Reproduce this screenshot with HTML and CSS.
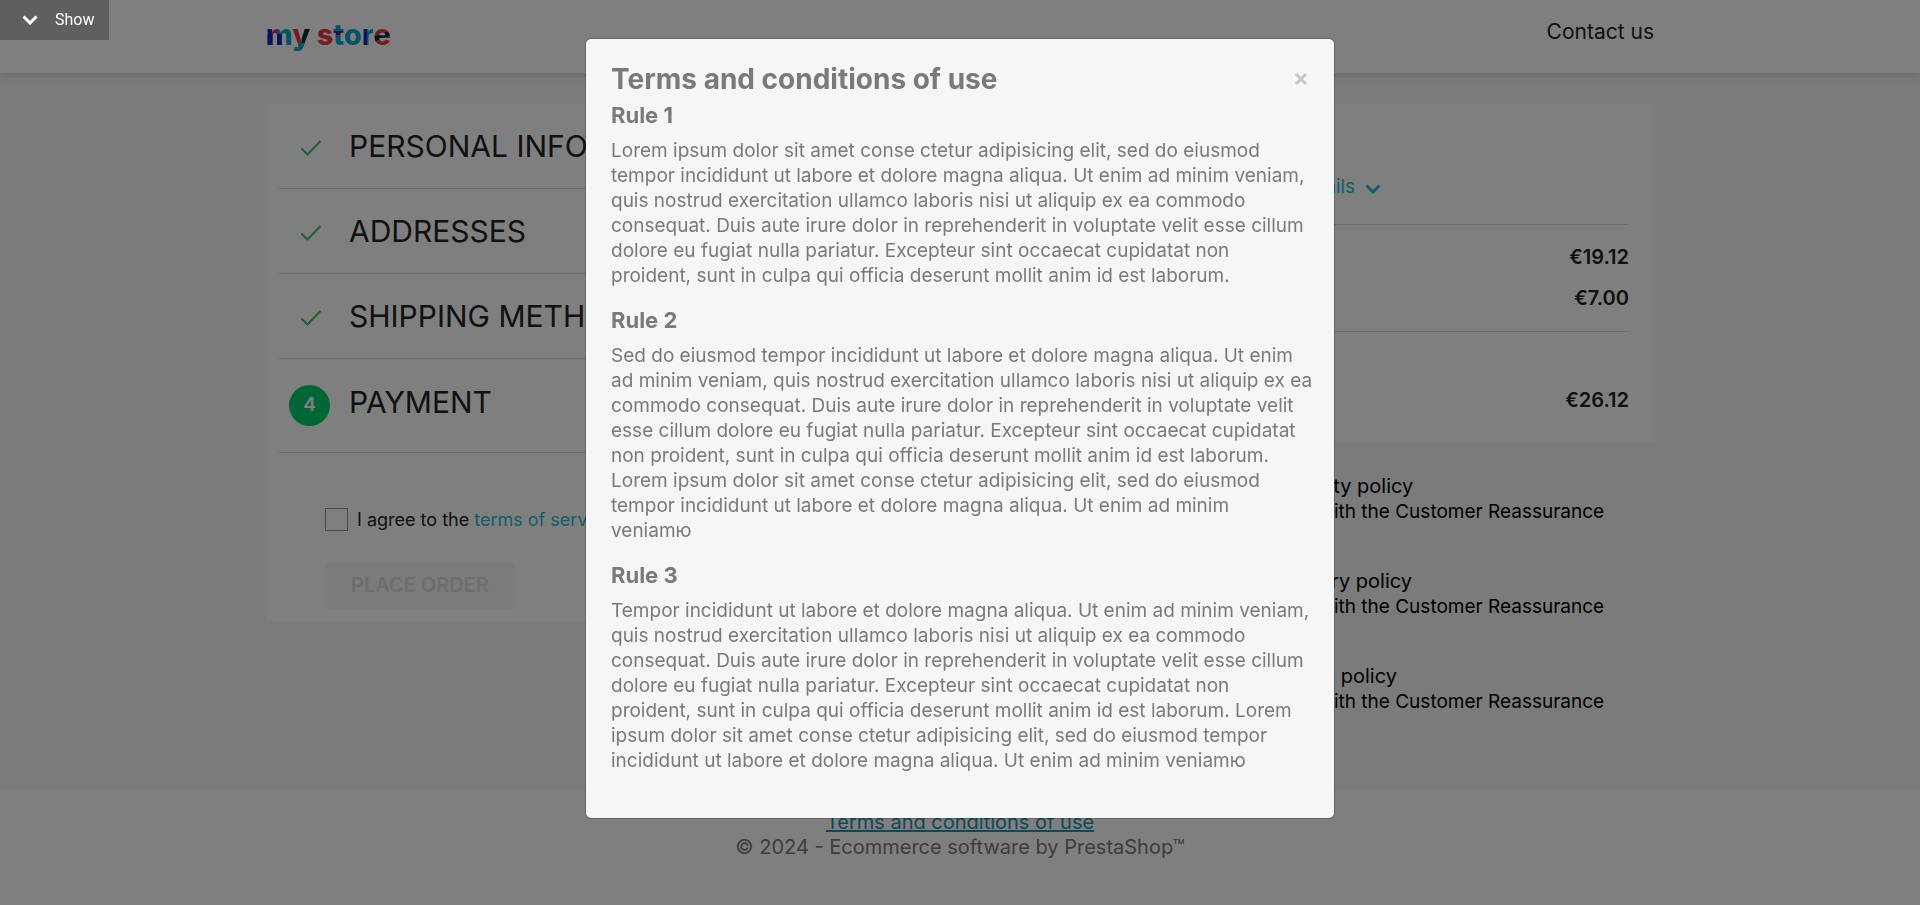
FILE: index.html
```html
<!DOCTYPE html>
<html lang="en">
<head>
<meta charset="utf-8">
<title>Checkout - my store</title>
<link rel="stylesheet" href="styles.css">
</head>
<body>
<header class="header">
  <div class="container header-inner">
    <a class="logo" href="#" aria-label="my store"><span class="lg-m">m</span><span class="lg-y">y</span> <span class="lg-s">s</span><span class="lg-t">t</span><span class="lg-o">o</span><span class="lg-r">r</span><span class="lg-e">e</span></a>
    <a class="contact" href="#">Contact us</a>
  </div>
</header>

<main class="wrapper">
  <div class="container columns">
    <section class="card checkout">
      <h1 class="step"><svg class="check" viewBox="0 0 22 18"><path d="M1.500 9.500 7.500 15.500 20.500 2"/></svg>Personal Information</h1>
      <h1 class="step"><svg class="check" viewBox="0 0 22 18"><path d="M1.500 9.500 7.500 15.500 20.500 2"/></svg>Addresses</h1>
      <h1 class="step"><svg class="check" viewBox="0 0 22 18"><path d="M1.500 9.500 7.500 15.500 20.500 2"/></svg>Shipping Method</h1>
      <h1 class="step current"><span class="number">4</span>Payment</h1>
      <form class="payment">
        <div class="agree">
          <input type="checkbox" id="agree" class="tick">
          <label for="agree">I agree to the <a class="link" href="#">terms of service</a></label>
        </div>
        <button class="order" type="button" disabled>PLACE ORDER</button>
      </form>
    </section>

    <aside class="side">
      <section class="card summary">
        <div class="summary-top">
          <a class="link details" href="#">Show details
            <svg class="chevron" viewBox="0 0 16 10"><path d="M1.500 1.500 8 8 14.500 1.500"/></svg></a>
        </div>
        <div class="amounts">
          <span class="value">€19.12</span>
          <span class="value">€7.00</span>
        </div>
        <div class="total"><span class="value">€26.12</span></div>
      </section>
      <ul class="policies">
        <li>Security policy<p>(edit with the Customer Reassurance</p></li>
        <li>Delivery policy<p>(edit with the Customer Reassurance</p></li>
        <li>Return policy<p>(edit with the Customer Reassurance</p></li>
      </ul>
    </aside>
  </div>
</main>

<footer class="footer">
  <a class="terms" href="#">Terms and conditions of use</a>
  <p>© 2024 - Ecommerce software by PrestaShop™</p>
</footer>

<div class="backdrop">
  <div class="modal" role="dialog" aria-modal="true" aria-labelledby="modal-title">
    <div class="modal-head">
      <h2 id="modal-title">Terms and conditions of use</h2>
      <button class="close" type="button" aria-label="Close"><svg viewBox="0 0 14 14"><path d="M2 2 12 12M12 2 2 12"/></svg></button>
    </div>
    <h3>Rule 1</h3>
    <p>Lorem ipsum dolor sit amet conse ctetur adipisicing elit, sed do eiusmod tempor incididunt ut labore et dolore magna aliqua. Ut enim ad minim veniam, quis nostrud exercitation ullamco laboris nisi ut aliquip ex ea commodo consequat. Duis aute irure dolor in reprehenderit in voluptate velit esse cillum dolore eu fugiat nulla pariatur. Excepteur sint occaecat cupidatat non proident, sunt in culpa qui officia deserunt mollit anim id est laborum.</p>
    <h3>Rule 2</h3>
    <p>Sed do eiusmod tempor incididunt ut labore et dolore magna aliqua. Ut enim ad minim veniam, quis nostrud exercitation ullamco laboris nisi ut aliquip ex ea commodo consequat. Duis aute irure dolor in reprehenderit in voluptate velit esse cillum dolore eu fugiat nulla pariatur. Excepteur sint occaecat cupidatat non proident, sunt in culpa qui officia deserunt mollit anim id est laborum. Lorem ipsum dolor sit amet conse ctetur adipisicing elit, sed do eiusmod tempor incididunt ut labore et dolore magna aliqua. Ut enim ad minim veniamю</p>
    <h3>Rule 3</h3>
    <p>Tempor incididunt ut labore et dolore magna aliqua. Ut enim ad minim veniam, quis nostrud exercitation ullamco laboris nisi ut aliquip ex ea commodo consequat. Duis aute irure dolor in reprehenderit in voluptate velit esse cillum dolore eu fugiat nulla pariatur. Excepteur sint occaecat cupidatat non proident, sunt in culpa qui officia deserunt mollit anim id est laborum. Lorem ipsum dolor sit amet conse ctetur adipisicing elit, sed do eiusmod tempor incididunt ut labore et dolore magna aliqua. Ut enim ad minim veniamю</p>
  </div>
</div>

<button class="show" type="button"><svg viewBox="0 0 16 10"><path d="M1.500 1.500 8 8 14.500 1.500"/></svg>Show</button>
</body>
</html>
```
FILE: styles.css
```css
* { box-sizing: border-box; }
body {
  margin: 0;
  min-height: 100vh;
  display: flex;
  flex-direction: column;
  background: #fff;
  color: #232323;
  font: 19px/25px Inter, "Liberation Sans", sans-serif;
  overflow: hidden;
}
h1, h2, h3, p, ul { margin: 0; padding: 0; }
a { color: inherit; text-decoration: none; }
svg { fill: none; stroke: currentColor; }
.container { width: 100%; max-width: 1388px; margin: 0 auto; }

.header {
  height: 73px;
  background: #fff;
  box-shadow: 0 2px 8px rgba(0, 0, 0, .15);
  position: relative;
}
.header-inner { display: flex; justify-content: space-between; padding-top: 18px; }
.logo { font-size: 29px; line-height: 34px; font-weight: 800; white-space: nowrap; }
.logo span { -webkit-background-clip: text; background-clip: text; color: transparent; }
.lg-m { background-image: linear-gradient(transparent 50%, #0a2ab8 50%), linear-gradient(90deg, #0a2ab8 22%, #c02aa0 22% 48%, #08a8d0 48%); background-size: 62% 100%, 100% 100%; background-repeat: no-repeat; }
.lg-y { background-image: linear-gradient(180deg, transparent 74%, #08a8d0 74%), linear-gradient(90deg, #e4383c 55%, #083038 55%); }
.lg-s { background-image: linear-gradient(#e4383c, #e4383c); }
.lg-t { background-image: linear-gradient(180deg, #08a8d0 40%, #5a10a0 40% 52%, #08a8d0 52%); }
.lg-o { background-image: linear-gradient(#08a8d0, #08a8d0); }
.lg-r { background-image: linear-gradient(90deg, #0a2ab8 50%, #08a8d0 50%); }
.lg-e { background-image: linear-gradient(160deg, #e4383c 48%, #083038 48% 60%, #e4383c 60%); }
.contact { font-size: 21px; line-height: 27px; color: #232323; }

.wrapper { background: #f6f6f6; padding: 31px 0 76px; }
.columns { display: grid; grid-template-columns: 25fr 12fr; gap: 37px; align-items: start; }
.card { background: #fff; }

.checkout { padding: 0 13px 12px; }
.step {
  display: grid;
  grid-template-columns: 60px 1fr;
  column-gap: 10px;
  align-items: center;
  height: 85px;
  padding-bottom: 1px;
  border-bottom: 1px solid #dcdcdc;
  font-size: 30px;
  font-weight: 400;
  line-height: 40px;
  text-transform: uppercase;
}
.step.current { height: 94px; padding-bottom: 7px; }
.check { width: 22px; height: 18px; margin: 5px 0 0 21px; color: #4cbb6c; stroke-width: 2; }
.number {
  width: 41px;
  height: 41px;
  margin: 7px 0 0 10px;
  border-radius: 50%;
  background: #00ca6f;
  color: #fff;
  font-size: 19px;
  font-weight: 600;
  text-align: center;
}
.payment { padding: 54px 0 0 46px; }
.agree { display: flex; align-items: center; gap: 9px; font-size: 18px; }
.tick { appearance: none; width: 23px; height: 23px; margin: 0; border: 1px solid #999; background: #fff; }
.link { color: #24b9d7; }
.order {
  display: block;
  margin-top: 30px;
  padding: 10px 26px;
  border: 0;
  background: #f6f6f6;
  color: #dcdcdc;
  font: 600 20px/27px Inter, "Liberation Sans", sans-serif;
}

.summary { padding: 0 25px; }
.summary-top { padding: 70px 0 25px; border-bottom: 1px solid #dcdcdc; }
.details { display: flex; align-items: center; gap: 10px; }
.chevron { width: 16px; height: 10px; margin-top: 4px; stroke-width: 3; }
.amounts { display: grid; gap: 16px; padding: 20px 0; border-bottom: 1px solid #dcdcdc; text-align: right; }
.value { font-size: 20px; font-weight: 600; }
.total { padding: 56px 0 29px; text-align: right; }
.policies { list-style: none; padding: 32px 25px 0 57px; display: grid; gap: 45px; color: #000; font-size: 20px; white-space: nowrap; }
.policies p { font-size: 19px; }

.footer { flex: 1; padding-top: 20px; text-align: center; color: #7a7a7a; font-size: 20px; }
.terms { color: #1d93ab; text-decoration: underline; }

.backdrop { position: fixed; inset: 0; background: rgba(0, 0, 0, .5); padding: 38px 20px; }
.modal {
  max-width: 750px;
  margin: 0 auto;
  padding: 25px 20px 45px 25px;
  border: 1px solid rgba(0, 0, 0, .2);
  border-radius: 6px;
  background: #f6f6f6;
  background-clip: padding-box;
  color: #7a7a7a;
}
.modal-head { display: flex; justify-content: space-between; align-items: center; height: 30px; margin-bottom: 9px; }
.modal h2 { font-size: 28px; line-height: 30px; font-weight: 700; }
.modal h3 { font-size: 22px; line-height: 25px; font-weight: 700; margin-bottom: 10px; }
.modal p + h3 { margin-top: 20px; }
.close { display: flex; padding: 0; margin-right: 6px; border: 0; background: none; color: #c8c8c8; }
.close svg { width: 14px; height: 14px; stroke-width: 3; }

.show {
  position: fixed;
  top: 0;
  left: 0;
  display: flex;
  align-items: center;
  gap: 17px;
  height: 40px;
  padding: 0 15px 0 22px;
  border: 0;
  background: #5f5f5f;
  color: #fff;
  font: 16px/20px Roboto, sans-serif;
}
.show svg { width: 16px; height: 10px; stroke-width: 3; }
```
